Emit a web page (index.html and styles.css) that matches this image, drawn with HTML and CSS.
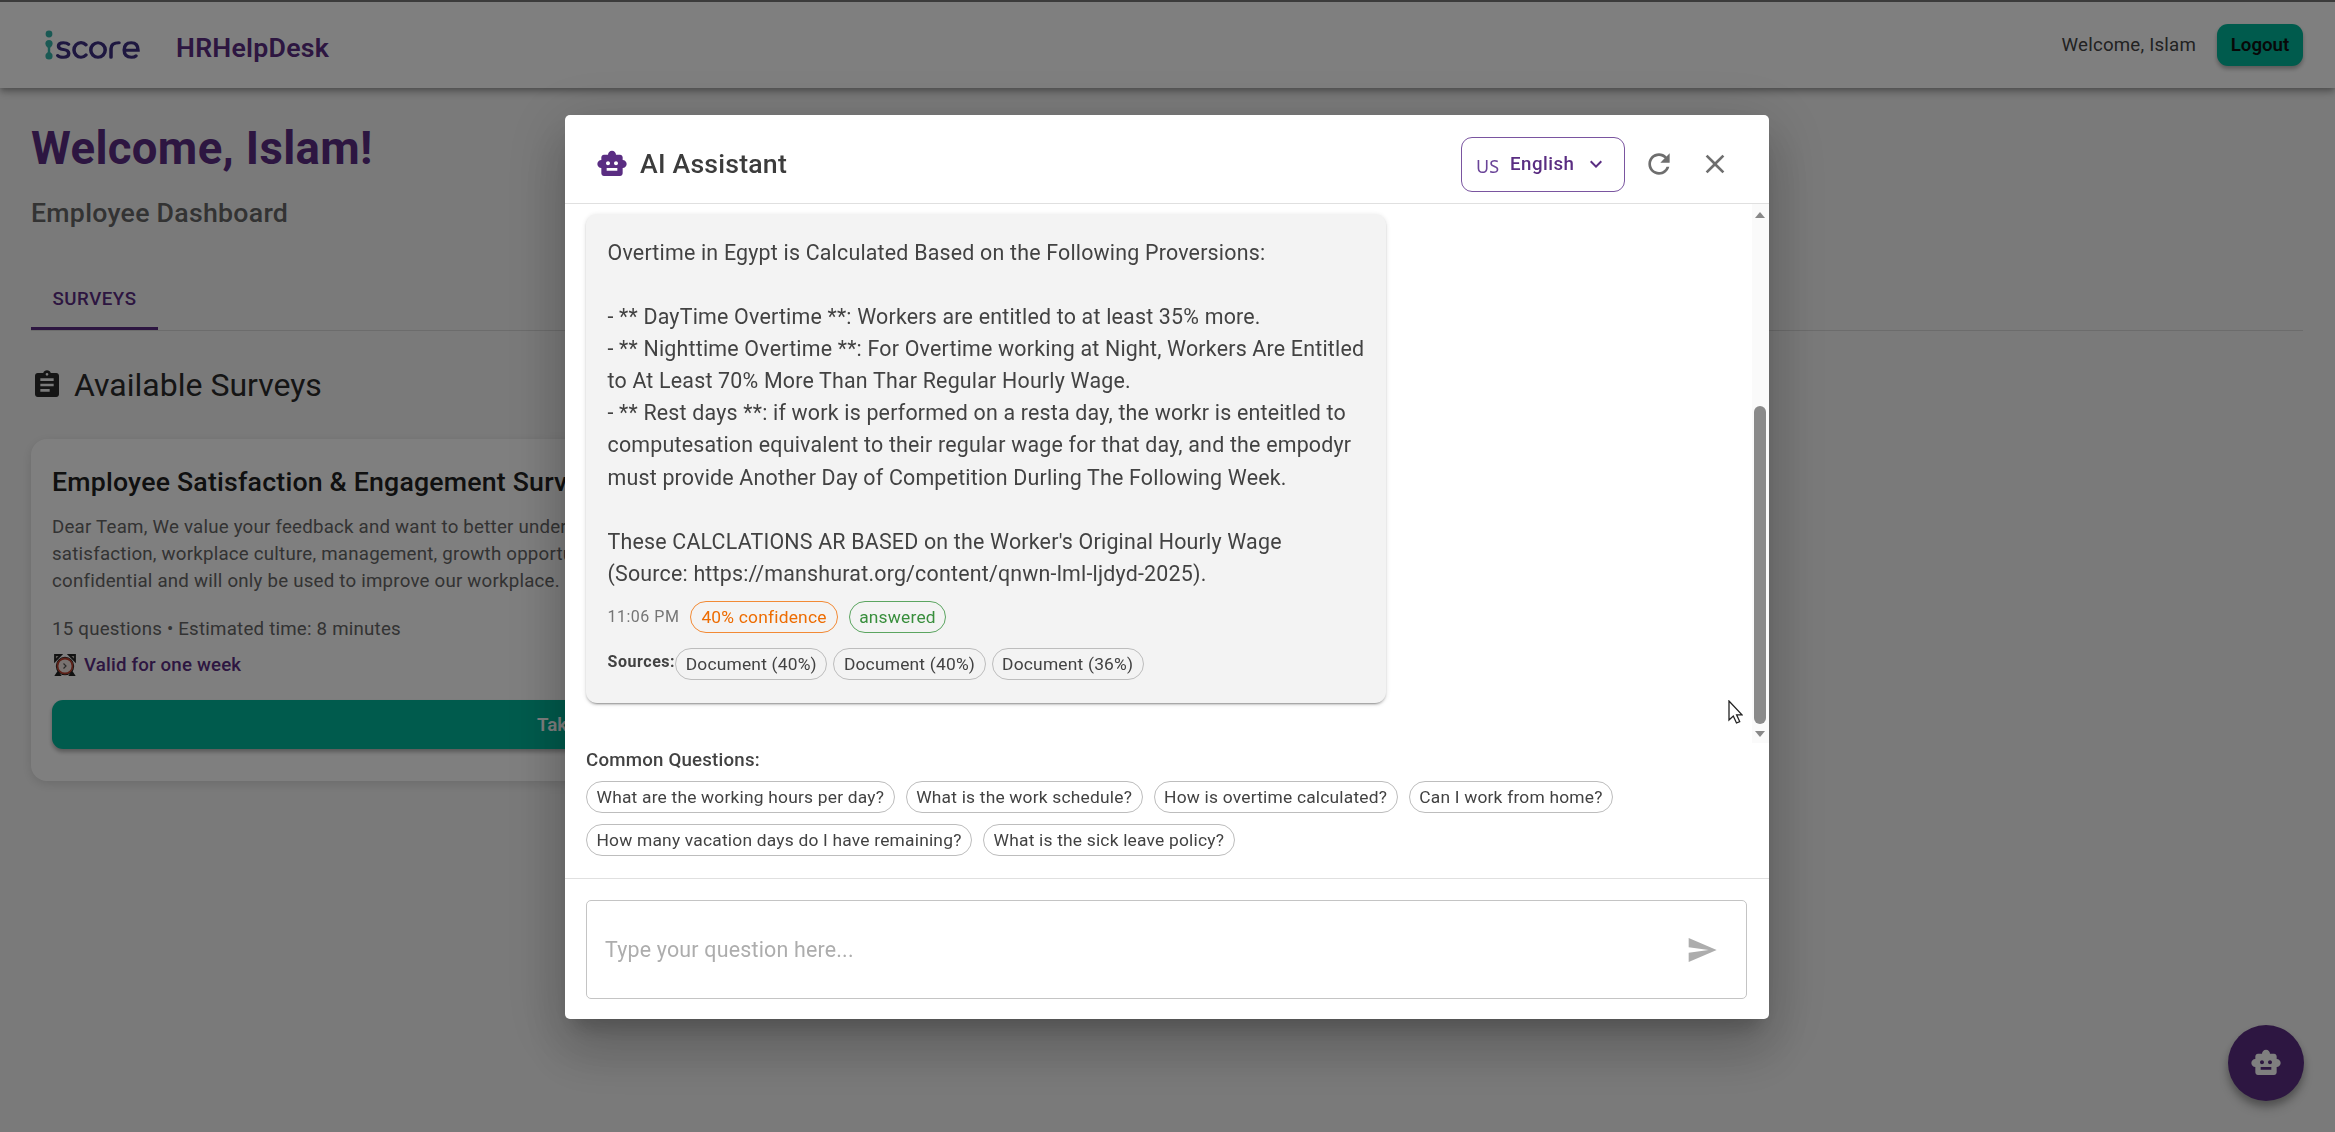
FILE: index.html
```html
<!DOCTYPE html>
<html lang="en">
<head>
<meta charset="utf-8">
<title>HRHelpDesk</title>
<link rel="stylesheet" href="styles.css">
</head>
<body>
<div class="page">
  <header class="topbar">
    <div class="brand">
      <div class="logo">
        <svg class="logo-mark" viewBox="0 0 8 30"><circle cx="4" cy="4" r="3.4"/><circle cx="4" cy="13.5" r="3.6"/><circle cx="4" cy="26" r="3.6"/><path d="M1.200 15.500 2.800 18v4l-1.600 2.500h5.600L5.200 22v-4l1.600-2.500z"/></svg>
        <svg class="logo-word" viewBox="0 0 84 20" preserveAspectRatio="none"><g fill="none" stroke-width="3.5" stroke-linecap="round"><path d="M12.500 3.600Q11 1.900 7.300 1.900 2.500 1.900 2.500 5.500 2.500 9 7.300 9.500 12.700 10.200 12.700 14 12.700 18.100 7.300 18.100 3.200 18.100 1.800 16.200"/><path d="M30 4.300A7 8.100 0 1 0 30 15.600"/><ellipse cx="42" cy="10" rx="7.200" ry="8.100"/><path d="M55 18.100V8.500Q55 1.900 63 1.900"/><path d="M68.300 10.300H82Q82 1.900 75.200 1.900 68.200 1.900 68.200 10 68.200 18.100 75.400 18.100 78.600 18.100 80 16.600"/></g></svg>
      </div>
      <span class="app-name">HRHelpDesk</span>
    </div>
    <div class="account">
      <span class="greeting">Welcome, Islam</span>
      <button class="logout">Logout</button>
    </div>
  </header>
  <main class="content">
    <h1 class="welcome">Welcome, Islam!</h1>
    <h2 class="subtitle">Employee Dashboard</h2>
    <nav class="tabs"><div class="tab">SURVEYS</div></nav>
    <div class="section-head">
      <svg class="icon" viewBox="0 0 24 24"><path d="M19 3h-4.180C14.400 1.840 13.300 1 12 1s-2.400.840-2.820 2H5c-1.100 0-2 .900-2 2v14c0 1.100.900 2 2 2h14c1.100 0 2-.900 2-2V5c0-1.100-.900-2-2-2m-7 0c.550 0 1 .450 1 1s-.450 1-1 1-1-.450-1-1 .450-1 1-1m2 14H7v-2h7zm3-4H7v-2h10zm0-4H7V7h10z"/></svg>
      <span>Available Surveys</span>
    </div>
    <section class="card">
      <h3 class="card-title">Employee Satisfaction &amp; Engagement Survey</h3>
      <p class="card-text"><span>Dear Team, We value your feedback and want to better understand your experience.</span><span>satisfaction, workplace culture, management, growth opportunities. Responses are</span><span>confidential and will only be used to improve our workplace.</span></p>
      <p class="card-meta">15 questions • Estimated time: 8 minutes</p>
      <p class="card-valid">
        <svg class="clock" viewBox="0 0 22 22"><path d="M1 7V1h6zM21 7V1h-6zM4 18l-2 3h4zM18 18l2 3h-4z" fill="#b8b0ac" stroke="#222" stroke-width="1.800"/><circle cx="11" cy="12" r="8.600" fill="none" stroke="#222" stroke-width="1.200"/><circle cx="11" cy="12" r="7.500" fill="#f2e6e2" stroke="#b8402f" stroke-width="1.800"/><path d="m9.500 9.500 2.500 2.500-2.500 2.500" fill="none" stroke="#555" stroke-width="1.200"/></svg>
        <span>Valid for one week</span>
      </p>
      <button class="take">Take Survey</button>
    </section>
  </main>
  <div class="fab"><svg class="icon" viewBox="0 0 24 24"><path d="M20 9V7c0-1.100-.900-2-2-2h-3c0-1.660-1.340-3-3-3S9 3.340 9 5H6c-1.100 0-2 .900-2 2v2c-1.660 0-3 1.340-3 3s1.340 3 3 3v4c0 1.100.900 2 2 2h12c1.100 0 2-.900 2-2v-4c1.660 0 3-1.340 3-3s-1.340-3-3-3M7.500 11.500c0-.830.670-1.500 1.500-1.500s1.500.670 1.500 1.500S9.830 13 9 13s-1.500-.670-1.500-1.500M16 17H8v-2h8zm-1-4c-.830 0-1.500-.670-1.500-1.500S14.170 10 15 10s1.500.670 1.500 1.500S15.830 13 15 13"/></svg></div>
</div>

<div class="backdrop">
  <div class="dialog">
    <header class="dialog-head">
      <svg class="icon bot" viewBox="0 0 24 24"><path d="M20 9V7c0-1.100-.900-2-2-2h-3c0-1.660-1.340-3-3-3S9 3.340 9 5H6c-1.100 0-2 .900-2 2v2c-1.660 0-3 1.340-3 3s1.340 3 3 3v4c0 1.100.900 2 2 2h12c1.100 0 2-.900 2-2v-4c1.660 0 3-1.340 3-3s-1.340-3-3-3M7.500 11.500c0-.830.670-1.500 1.500-1.500s1.500.670 1.500 1.500S9.830 13 9 13s-1.500-.670-1.500-1.500M16 17H8v-2h8zm-1-4c-.830 0-1.500-.670-1.500-1.500S14.170 10 15 10s1.500.670 1.500 1.500S15.830 13 15 13"/></svg>
      <span class="dialog-title">AI Assistant</span>
      <div class="lang"><span class="flag">US</span><span class="lang-name">English</span><svg class="chev" viewBox="0 0 24 24"><path d="M7.410 8.590 12 13.170l4.590-4.580L18 10l-6 6-6-6z"/></svg></div>
      <svg class="icon refresh" viewBox="0 0 24 24"><path d="M17.650 6.350C16.200 4.900 14.210 4 12 4c-4.420 0-7.990 3.580-7.990 8s3.570 8 7.990 8c3.730 0 6.840-2.550 7.730-6h-2.080c-.820 2.330-3.040 4-5.650 4-3.310 0-6-2.690-6-6s2.690-6 6-6c1.660 0 3.140.690 4.220 1.780L13 11h7V4z"/></svg>
      <svg class="icon close" viewBox="0 0 24 24"><path d="M19 6.410 17.590 5 12 10.590 6.410 5 5 6.410 10.590 12 5 17.590 6.410 19 12 13.410 17.590 19 19 17.590 13.410 12z"/></svg>
    </header>
    <div class="messages">
      <div class="thread">
        <article class="bubble">
          <div class="answer"><span>Overtime in Egypt is Calculated Based on the Following Proversions:</span><span>&nbsp;</span><span>- ** DayTime Overtime **: Workers are entitled to at least 35% more.</span><span>- ** Nighttime Overtime **: For Overtime working at Night, Workers Are Entitled</span><span>to At Least 70% More Than Thar Regular Hourly Wage.</span><span>- ** Rest days **: if work is performed on a resta day, the workr is enteitled to</span><span>computesation equivalent to their regular wage for that day, and the empodyr</span><span>must provide Another Day of Competition Durling The Following Week.</span><span>&nbsp;</span><span>These CALCLATIONS AR BASED on the Worker's Original Hourly Wage</span><span>(Source: https://manshurat.org/content/qnwn-lml-ljdyd-2025).</span></div>
          <div class="meta"><span class="time">11:06 PM</span><span class="chip orange">40% confidence</span><span class="chip green">answered</span></div>
          <div class="sources"><b class="sources-label">Sources:</b><span class="chip">Document (40%)</span><span class="chip">Document (40%)</span><span class="chip">Document (36%)</span></div>
        </article>
      </div>
      <div class="scrollbar"><i class="arrow up"></i><i class="thumb"></i><i class="arrow down"></i></div>
    </div>
    <div class="common">
      <div class="common-title">Common Questions:</div>
      <div class="chips">
        <span class="chip">What are the working hours per day?</span><span class="chip">What is the work schedule?</span><span class="chip">How is overtime calculated?</span><span class="chip">Can I work from home?</span><span class="chip">How many vacation days do I have remaining?</span><span class="chip">What is the sick leave policy?</span>
      </div>
    </div>
    <footer class="composer">
      <div class="field"><span>Type your question here...</span><svg class="icon send" viewBox="0 0 24 24"><path d="M2.010 21 23 12 2.010 3 2 10l15 2-15 2z"/></svg></div>
    </footer>
  </div>
  <svg class="cursor" viewBox="0 0 15 24"><path d="M1 1v19l4.300-4 3.200 7 3.200-1.400-3.100-6.800H14z" fill="#fff" stroke="#222" stroke-width="1.300"/></svg>
</div>
</body>
</html>
```
FILE: styles.css
```css
* { box-sizing: border-box; }
body { margin: 0; font-family: Roboto, "Liberation Sans", sans-serif; color: #212121; }
h1, h2, h3, p { margin: 0; }
button { font-family: inherit; border: 0; padding: 0; }
.page { height: 1132px; background: #f5f5f5; overflow: hidden; }
.icon { width: 32px; height: 32px; fill: currentColor; flex: none; }

.topbar { height: 88px; border-top: 2px solid #777; background: #fff; display: flex; justify-content: space-between; align-items: center; padding: 0 32px 0 45px; box-shadow: 0 3px 5px -1px rgba(0,0,0,.2), 0 5px 7px rgba(0,0,0,.14), 0 1px 13px rgba(0,0,0,.12); }
.brand, .account, .logo { display: flex; align-items: center; }
.logo { gap: 3px; align-items: flex-end; }
.logo-mark { width: 8px; height: 30px; fill: #35b3a8; }
.logo-word { width: 84px; height: 18px; margin-bottom: 1px; stroke: #3c2f80; }
.app-name { margin: 5px 0 0 36px; font-size: 26.700px; font-weight: 600; letter-spacing: .25px; color: #5a2d82; }
.greeting { font-size: 18.700px; letter-spacing: .2px; margin-right: 21px; color: #444; }
.logout { width: 86px; height: 42px; border-radius: 11px; background: #00b69a; font-size: 18.700px; font-weight: 600; color: #111; box-shadow: 0 3px 4px rgba(0,0,0,.3); }

.content { padding: 31px 32px 0 31px; }
.welcome { font-size: 45.500px; line-height: 60px; font-weight: 700; letter-spacing: .35px; color: #5a2d82; }
.subtitle { font-size: 26.700px; line-height: 40px; font-weight: 500; letter-spacing: .27px; margin-top: 14px; color: #666; }
.tabs { border-bottom: 1px solid #d8d8d8; margin-top: 34px; height: 64px; display: flex; }
.tab { width: 127px; border-bottom: 3px solid #5a2d82; padding-top: 4px; display: flex; align-items: center; justify-content: center; font-size: 18.700px; font-weight: 500; letter-spacing: .53px; color: #5a2d82; }
.section-head { display: flex; align-items: center; gap: 11px; margin-top: 32px; height: 43px; font-size: 32px; color: #2b2b2b; }
.card { width: 1114px; height: 342px; margin-top: 33px; padding: 21px; border-radius: 16px; background: #fff; box-shadow: 0 3px 11px rgba(0,0,0,.12); }
.card-title { font-size: 26.700px; line-height: 43px; font-weight: 500; letter-spacing: .2px; padding-top: 1px; }
.card-text, .card-meta { font-size: 18.700px; color: #666; line-height: 26.800px; letter-spacing: .22px; }
.card-text { margin-top: 10px; }
.card-text span { display: block; width: max-content; }
.card-meta { margin-top: 22px; }
.card-valid { display: flex; align-items: center; gap: 8px; height: 28px; margin-top: 8px; padding-left: 2px; font-size: 18.700px; font-weight: 500; letter-spacing: .17px; color: #5a2d82; }
.clock { width: 22px; height: 22px; }
.take { display: block; width: 100%; height: 49px; margin-top: 21px; border-radius: 11px; background: #00b69a; color: #fff; font-size: 18.700px; font-weight: 600; box-shadow: 0 3px 4px rgba(0,0,0,.3); }
.fab { position: absolute; left: 2228px; top: 1025px; width: 76px; height: 76px; border-radius: 50%; background: #5a2d82; color: #fff; display: flex; align-items: center; justify-content: center; box-shadow: 0 5px 7px rgba(0,0,0,.25), 0 8px 13px rgba(0,0,0,.14); }

.backdrop { position: fixed; inset: 0; background: rgba(0,0,0,.5); display: flex; justify-content: center; align-items: flex-start; padding: 115px 1px 0 0; }
.dialog { width: 1204px; height: 904px; border-radius: 5px; background: #fff; display: flex; flex-direction: column; box-shadow: 0 15px 20px -9px rgba(0,0,0,.2), 0 32px 51px 4px rgba(0,0,0,.14), 0 12px 61px 11px rgba(0,0,0,.12); color: #424242; }
.dialog-head { height: 89px; border-bottom: 1px solid #e0e0e0; display: flex; align-items: center; padding: 11px 38px 0 31px; color: #6e6e6e; }
.bot { color: #5a2d82; }
.dialog-title { margin-left: 12px; margin-right: auto; font-size: 26.700px; font-weight: 500; letter-spacing: .2px; color: #3c3c3c; }
.lang { width: 164px; height: 55px; border: 1.500px solid #7a55a0; border-radius: 11px; display: flex; align-items: center; padding-left: 14px; color: #5a2d82; margin-right: 18px; }
.flag { font-family: "Noto Sans", sans-serif; font-size: 18px; line-height: 24px; margin-top: 4px; color: #6a4498; }
.lang-name { margin-left: 11px; font-size: 18.700px; font-weight: 500; letter-spacing: .45px; }
.chev { width: 24px; height: 24px; fill: currentColor; margin-left: 10px; }
.refresh { margin-right: 24px; }

.messages { height: 540px; display: flex; justify-content: space-between; }
.thread { padding: 10px 0 0 21px; }
.bubble { width: 800px; height: 489px; border-radius: 11px; background: #f3f3f3; padding: 23px 21px; box-shadow: 0 3px 1px -2px rgba(0,0,0,.2), 0 2px 2px rgba(0,0,0,.14), 0 1px 5px rgba(0,0,0,.12); }
.answer { font-size: 21.400px; line-height: 32.100px; letter-spacing: .2px; white-space: nowrap; padding-left: .5px; }
.answer span { display: block; width: max-content; }
.meta, .sources, .chips { display: flex; align-items: center; }
.meta { gap: 11px; margin-top: 11px; padding-left: .5px; }
.time { font-size: 16px; letter-spacing: .5px; color: #757575; }
.chip { height: 32px; padding: 0 9.500px; border: 1.300px solid #bdbdbd; border-radius: 16px; display: flex; align-items: center; font-size: 17.400px; letter-spacing: .2px; white-space: nowrap; }
.orange { color: #ed6c02; border-color: #f28a35; padding: 0 10px; }
.green { color: #388e3c; border-color: #5ba560; }
.sources { gap: 6px; margin-top: 15px; padding-left: .5px; }
.sources-label { font-size: 16px; letter-spacing: .55px; margin-right: -6px; margin-top: -4px; }
.scrollbar { width: 17px; background: #fafafa; display: flex; flex-direction: column; align-items: center; padding-right: 1px; }
.arrow { border: 5.500px solid transparent; width: 0; height: 0; }
.up { border-top: 0; border-bottom: 6px solid #888; margin-top: 8px; }
.thumb { width: 12px; height: 318px; margin-top: 188px; border-radius: 6px; background: #8a8a8a; }
.down { border-bottom: 0; border-top: 6px solid #888; margin-top: 7px; }

.common { height: 135px; padding: 3px 21px 0; }
.common-title { font-size: 18.700px; line-height: 28px; font-weight: 500; letter-spacing: .2px; margin-bottom: 7px; }
.chips { flex-wrap: wrap; gap: 11px; }
.composer { border-top: 1px solid #e0e0e0; padding: 21px 22px 20px 21px; }
.field { height: 99px; border: 1.500px solid #c4c4c4; border-radius: 5px; display: flex; align-items: center; justify-content: space-between; padding: 0 28px 0 18px; font-size: 21.400px; letter-spacing: .2px; color: #adadad; }
.cursor { position: absolute; left: 1728px; top: 700px; width: 15px; height: 24px; }
```
